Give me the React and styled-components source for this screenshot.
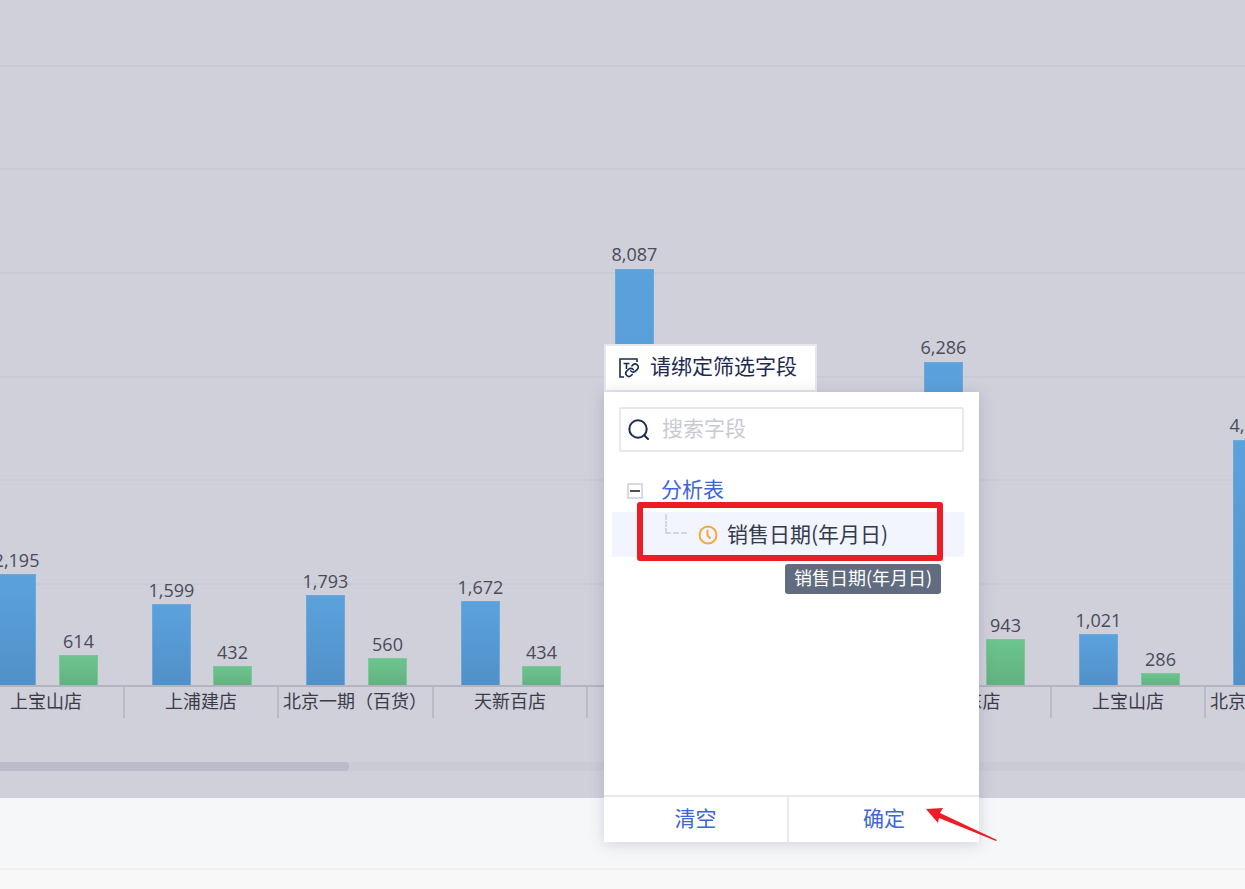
import React from "react";
import styled, { createGlobalStyle } from "styled-components";

const CJK = '"Noto Sans CJK SC", "Noto Sans", sans-serif';

const GlobalStyle = createGlobalStyle`
  html, body {
    margin: 0;
    padding: 0;
    background: #f8f8f8;
    font-family: ${CJK};
  }
`;

const Page = styled.div`
  position: relative;
  width: 1245px;
  height: 889px;
  overflow: hidden;
  display: flex;
  flex-direction: column;
`;

const ChartArea = styled.div`
  height: 798px;
  flex: none;
  background: #d0d0db;
  display: flex;
  flex-direction: column;
`;

const ChartSvg = styled.svg`
  display: block;
  flex: none;
`;

const ScrollTrack = styled.div`
  height: 9px;
  background: #cbcbd6;
  border-radius: 4px;
`;

const ScrollThumb = styled.div`
  width: 349px;
  height: 100%;
  background: #bbbcc9;
  border-radius: 0 4px 4px 0;
`;

const FooterBand = styled.div`
  height: 70px;
  flex: none;
  background: #f6f7f9;
  border-bottom: 2px solid #f0f0f2;
`;

const BottomBand = styled.div`
  flex: 1;
  background: #f8f8f8;
`;

const FilterPopup = styled.div`
  position: absolute;
  left: 604px;
  top: 344px;
  width: 375px;
  display: flex;
  flex-direction: column;
`;

const FieldTab = styled.div`
  box-sizing: border-box;
  width: 213px;
  height: 48px;
  background: #fff;
  border: 2px solid #e6e7ee;
  padding-left: 13px;
  display: flex;
  align-items: center;
  gap: 11px;
  font-size: 21px;
  color: #1c2b52;
`;

/* the CJK face sits low in its line box, this pulls it back up */
const Raised = styled.span`
  line-height: 1.2;
  margin-bottom: ${(p) => p.$by || 4}px;
`;

const Panel = styled.div`
  box-sizing: border-box;
  height: 450px;
  background: #fff;
  box-shadow: 0 2px 14px rgba(80, 84, 110, 0.22);
  display: flex;
  flex-direction: column;
`;

const SearchBox = styled.div`
  box-sizing: border-box;
  height: 45px;
  margin: 15px 15px 0;
  border: 2px solid #e8e9f0;
  border-radius: 2px;
  padding-left: 7px;
  display: flex;
  align-items: center;
  gap: 13px;
  font-size: 21px;
  color: #c8cad2;
`;

const Tree = styled.div`
  flex: 1;
  padding: 18px 15px 0 8px;
`;

const TreeHead = styled.div`
  height: 42px;
  padding-left: 15px;
  display: flex;
  align-items: center;
  gap: 18px;
  font-size: 21px;
  color: #3d66d6;
`;

const Collapse = styled.span`
  box-sizing: border-box;
  width: 16px;
  height: 16px;
  border: 2px solid #d9dae2;
  display: flex;
  align-items: center;
  justify-content: center;

  &::before {
    content: "";
    width: 10px;
    height: 2px;
    background: #4a4f60;
  }
`;

const TreeRow = styled.div`
  position: relative;
  height: 45px;
  background: #f2f5fd;
  display: flex;
  align-items: center;
  padding-left: 53px;
  gap: 9px;
  font-size: 21px;
  color: #333a4d;
`;

const Connector = styled.span`
  position: absolute;
  left: 53px;
  top: 2px;
  width: 22px;
  height: 20px;
  box-sizing: border-box;
  border-left: 2px dashed #d3d5dd;
  border-bottom: 2px dashed #d3d5dd;
`;

const ClockWrap = styled.span`
  margin-left: 33px;
  display: flex;
`;

const Highlight = styled.div`
  position: absolute;
  left: 25px;
  top: -10px;
  width: 306px;
  height: 59px;
  box-sizing: border-box;
  border: 6px solid #ee1c25;
  border-radius: 3px;
`;

const Tip = styled.div`
  position: absolute;
  left: 173px;
  top: 52px;
  width: 156px;
  height: 30px;
  background: #626c80;
  border-radius: 3px;
  color: #fff;
  font-size: 18px;
  display: flex;
  align-items: center;
  justify-content: center;
`;

const PanelFooter = styled.div`
  height: 45px;
  border-top: 2px solid #e8e9f0;
  display: grid;
  grid-template-columns: 185px 1fr;
`;

const FooterButton = styled.div`
  display: flex;
  align-items: center;
  justify-content: center;
  font-size: 21px;
  color: #3d66d6;
  box-sizing: border-box;
  border-right: ${(p) => (p.$divider ? "2px solid #e8e9f0" : "none")};
`;

const Arrow = styled.svg`
  position: absolute;
  left: 920px;
  top: 800px;
`;

const gridLines = [66, 169, 273, 377, 480, 584];
const ticks = [124, 278, 433, 587, 742, 896, 1051, 1205];
const AXIS = 686;

const bars = [
  { x: -3, top: 574, label: "2,195", color: "blue" },
  { x: 59, top: 655, label: "614", color: "green" },
  { x: 152, top: 604, label: "1,599", color: "blue" },
  { x: 213, top: 666, label: "432", color: "green" },
  { x: 306, top: 595, label: "1,793", color: "blue" },
  { x: 368, top: 658, label: "560", color: "green" },
  { x: 461, top: 601, label: "1,672", color: "blue" },
  { x: 522, top: 666, label: "434", color: "green" },
  { x: 615, top: 269, label: "8,087", color: "blue" },
  { x: 924, top: 362, label: "6,286", color: "blue" },
  { x: 986, top: 639, label: "943", color: "green" },
  { x: 1079, top: 634, label: "1,021", color: "blue" },
  { x: 1141, top: 673, label: "286", color: "green" },
  { x: 1233, top: 440, label: "4,128", color: "blue" },
];

const categories = [
  { x: 46, name: "上宝山店" },
  { x: 201, name: "上浦建店" },
  { x: 355, name: "北京一期（百货）" },
  { x: 510, name: "天新百店" },
  { x: 973.5, name: "新东店" },
  { x: 1128, name: "上宝山店" },
  { x: 1282, name: "北京一期（百货）" },
];

function Chart() {
  return (
    <ChartSvg width="1245" height="762" viewBox="0 0 1245 762">
      <defs>
        <linearGradient id="blue" x1="0" y1="0" x2="0" y2="1">
          <stop offset="0" stopColor="#5ba2dd" />
          <stop offset="1" stopColor="#5190c8" />
        </linearGradient>
        <linearGradient id="green" x1="0" y1="0" x2="0" y2="1">
          <stop offset="0" stopColor="#6cc58e" />
          <stop offset="1" stopColor="#63b080" />
        </linearGradient>
      </defs>
      {gridLines.map((y) => (
        <line key={y} x1="0" x2="1245" y1={y} y2={y} stroke="#c9c9d3" strokeWidth="1.5" />
      ))}
      {bars.map((b) => (
        <g key={b.x}>
          <rect
            x={b.x + 0.5}
            y={b.top + 0.5}
            width="38"
            height={AXIS - b.top - 0.5}
            fill={`url(#${b.color})`}
            stroke={b.color === "blue" ? "#6da8da" : "#7cc79c"}
          />
          <text
            x={b.x + 19.5}
            y={b.top - (b.top > 500 ? 7 : 8)}
            textAnchor="middle"
            fontFamily='"Open Sans", sans-serif'
            fontSize="18"
            fill="#4a4b58"
          >
            {b.label}
          </text>
        </g>
      ))}
      <line x1="0" x2="1245" y1={AXIS} y2={AXIS} stroke="#b3b4c0" strokeWidth="2" />
      {ticks.map((x) => (
        <line key={x} x1={x} x2={x} y1={AXIS} y2="718" stroke="#b3b4c0" strokeWidth="1.5" />
      ))}
      {categories.map((c) => (
        <text
          key={c.x}
          x={c.x}
          y="708"
          textAnchor="middle"
          fontFamily={CJK}
          fontSize="18"
          fill="#3b3c48"
        >
          {c.name}
        </text>
      ))}
    </ChartSvg>
  );
}

function BindIcon() {
  return (
    <svg width="20" height="20" viewBox="0 0 20 20" fill="none" stroke="#1c2b52" strokeWidth="1.6">
      <path d="M5 19H1V1h17v3" />
      <path d="M4.5 5.5h6M7.5 5.5V11" />
      <g transform="translate(5.6 4.8) scale(0.62)" strokeWidth="2.6" strokeLinecap="round">
        <path d="M10 13a5 5 0 0 0 7.54.54l3-3a5 5 0 0 0-7.07-7.07l-1.72 1.71" />
        <path d="M14 11a5 5 0 0 0-7.54-.54l-3 3a5 5 0 0 0 7.07 7.07l1.71-1.71" />
      </g>
    </svg>
  );
}

function SearchIcon() {
  return (
    <svg width="21" height="21" viewBox="0 0 21 21" fill="none" stroke="#1c2b52" strokeWidth="2">
      <circle cx="10" cy="10" r="8.7" />
      <path d="M16.2 16.2l3.8 3.8" strokeLinecap="round" />
    </svg>
  );
}

function ClockIcon() {
  return (
    <svg width="20" height="20" viewBox="0 0 20 20" fill="none" stroke="#f5a93c" strokeWidth="2">
      <circle cx="10" cy="10" r="8.5" />
      <path d="M9.5 5.5v5l2.5 2.5" strokeLinecap="round" />
    </svg>
  );
}

export default function App() {
  return (
    <Page>
      <GlobalStyle />
      <ChartArea>
        <Chart />
        <ScrollTrack>
          <ScrollThumb />
        </ScrollTrack>
      </ChartArea>
      <FooterBand />
      <BottomBand />

      <FilterPopup>
        <FieldTab>
          <BindIcon />
          <Raised>请绑定筛选字段</Raised>
        </FieldTab>
        <Panel>
          <SearchBox>
            <SearchIcon />
            <Raised>搜索字段</Raised>
          </SearchBox>
          <Tree>
            <TreeHead>
              <Collapse />
              <Raised>分析表</Raised>
            </TreeHead>
            <TreeRow>
              <Connector />
              <ClockWrap>
                <ClockIcon />
              </ClockWrap>
              <Raised $by={2}>销售日期(年月日)</Raised>
              <Highlight />
              <Tip>
                <Raised $by={2}>销售日期(年月日)</Raised>
              </Tip>
            </TreeRow>
          </Tree>
          <PanelFooter>
            <FooterButton $divider>
              <Raised>清空</Raised>
            </FooterButton>
            <FooterButton>
              <Raised>确定</Raised>
            </FooterButton>
          </PanelFooter>
        </Panel>
      </FilterPopup>

      <Arrow width="85" height="50" viewBox="0 0 85 50">
        <polygon points="6,9 23,8 20,13 77,40 76,41 19,18 18,23" fill="#ee1c25" />
      </Arrow>
    </Page>
  );
}
